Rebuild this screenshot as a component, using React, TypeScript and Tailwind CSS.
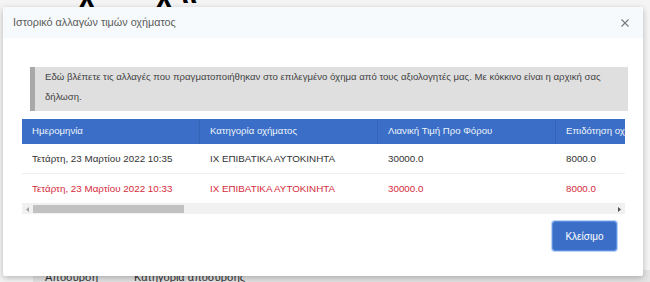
import React from "react";

const cols = ["Ημερομηνία", "Κατηγορία οχήματος", "Λιανική Τιμή Προ Φόρου", "Επιδότηση οχήματος"];
const rows = [
  { c: ["Τετάρτη, 23 Μαρτίου 2022 10:35", "ΙΧ ΕΠΙΒΑΤΙΚΑ ΑΥΤΟΚΙΝΗΤΑ", "30000.0", "8000.0"], red: false },
  { c: ["Τετάρτη, 23 Μαρτίου 2022 10:33", "ΙΧ ΕΠΙΒΑΤΙΚΑ ΑΥΤΟΚΙΝΗΤΑ", "30000.0", "8000.0"], red: true },
];

export default function App() {
  return (
    <div
      className="relative w-[650px] h-[282px] overflow-hidden bg-[#f4f4f4]"
      style={{ fontFamily: '"Liberation Sans", Arial, sans-serif' }}
    >
      {/* background page */}
      <div className="flex flex-col h-full">
        <div className="h-[10px] overflow-hidden relative">
          <div className="flex gap-[60px] pl-[78px] -mt-[22px] text-[30px] font-bold text-black leading-[30px]">
            <span>χ</span>
            <span>χ ιι</span>
          </div>
        </div>
        <div className="flex-1" />
        <div className="ml-[33px] bg-[#e4e4e4] h-[12px] flex items-start gap-[36px] pl-[12px] text-[11px] text-[#333] leading-[11px] pt-[2px]">
          <span>Απόσυρση</span>
          <span>Κατηγορία απόσυρσης</span>
        </div>
      </div>

      {/* modal */}
      <div className="absolute left-[3px] top-[7px] w-[640px] h-[269px] bg-white rounded-[2px] shadow-[0_2px_6px_rgba(0,0,0,0.25)] flex flex-col">
        <div className="h-[31px] flex items-center justify-between pl-[10px] pr-[14px] bg-[#f7fafd] rounded-t-[2px]">
          <span className="text-[10.8px] text-[#5a5a5a]">Ιστορικό αλλαγών τιμών οχήματος</span>
          <svg width="8" height="8" viewBox="0 0 8 8" className="mt-[1px]">
            <path d="M0.5 0.5L7.5 7.5M7.5 0.5L0.5 7.5" stroke="#777" strokeWidth="1.1" />
          </svg>
        </div>
        <div className="flex flex-col pl-[19px] pr-[15px] pt-[29px]">
          <div className="ml-[8px] h-[44px] bg-[#dfdfdf] border-l-[5px] border-[#a8a8a8] pl-[10px] pr-[8px] pt-[0px] text-[9.6px] leading-[20px] text-[#444]">
            Εδώ βλέπετε τις αλλαγές που πραγματοποιήθηκαν στο επιλεγμένο όχημα από τους αξιολογητές μας. Με κόκκινο είναι η αρχική σας δήλωση.
          </div>
          <div className="mt-[8px] w-[603px] overflow-hidden">
            <div className="flex bg-[#3b6fc7] h-[25px] text-[9.6px] text-[#eef3fb]">
              {cols.map((c, i) => (
                <div
                  key={i}
                  className={`w-[178px] shrink-0 pl-[10px] flex items-center whitespace-nowrap overflow-hidden ${i < 3 ? "border-r border-[#3464b8]" : ""}`}
                >
                  {c}
                </div>
              ))}
            </div>
            {rows.map((r, ri) => (
              <div
                key={ri}
                className={`flex h-[30px] pt-[1px] text-[9.8px] border-b border-[#efefef] ${r.red ? "text-[#d42b3b]" : "text-[#333]"}`}
              >
                {r.c.map((c, i) => (
                  <div key={i} className="w-[178px] shrink-0 pl-[10px] flex items-center whitespace-nowrap">
                    {c}
                  </div>
                ))}
              </div>
            ))}
            <div className="h-[10px] bg-[#f1f1f1] flex items-center">
              <div className="w-[11px] flex justify-center">
                <svg width="3" height="5" viewBox="0 0 3 5">
                  <path d="M3 0L0 2.5L3 5Z" fill="#a3a3a3" />
                </svg>
              </div>
              <div className="w-[151px] h-[8px] bg-[#c1c1c1]" />
              <div className="flex-1" />
              <div className="w-[11px] flex justify-center">
                <svg width="3" height="5" viewBox="0 0 3 5">
                  <path d="M0 0L3 2.5L0 5Z" fill="#505050" />
                </svg>
              </div>
            </div>
          </div>
          <div className="flex justify-end mt-[7px] pr-[11px]">
            <button className="w-[65px] h-[30px] bg-[#3b6fc7] text-white text-[10px] rounded-[3px] border border-[#5c8fe0] shadow-[0_0_0_1px_rgba(120,165,235,0.5)]">
              Κλείσιμο
            </button>
          </div>
        </div>
      </div>
    </div>
  );
}
